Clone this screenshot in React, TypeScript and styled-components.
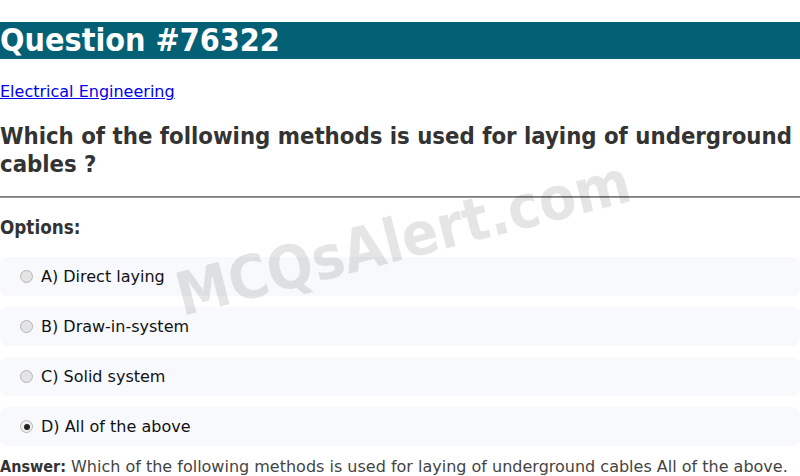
import React from "react";
import styled, { createGlobalStyle } from "styled-components";

const Global = createGlobalStyle`
  html, body { margin: 0; padding: 0; background: #fff; }
  body { font-family: "DejaVu Sans", Verdana, sans-serif; font-size: 16px; overflow: hidden; }
  b, strong, h1, h2, h3 { font-family: "DejaVu Sans Condensed", "DejaVu Sans", sans-serif; }
`;

const Page = styled.div`
  position: relative;
  width: 800px;
  height: 476px;
  overflow: hidden;
  display: flow-root;
`;

const TitleBar = styled.h1`
  margin: 22px 0 0;
  background: #036075;
  color: #fff;
  font-size: 32px;
  font-weight: bold;
  line-height: 37px;
`;

const Category = styled.p`
  margin: 24px 0 16px;
  line-height: 18.6px;
  a { color: #0000ee; text-decoration: underline; }
`;

const QuestionText = styled.h2`
  margin: 20px 0 18.5px;
  font-size: 23.7px;
  font-weight: bold;
  line-height: 28px;
  color: #333;
`;

const Rule = styled.hr`
  margin: 0;
  border: 0;
  border-top: 1px solid #7a7a7a;
  border-bottom: 1px solid #9a9a9a;
  height: 0;
`;

const OptionsTitle = styled.h3`
  margin: 19px 0 18.5px;
  font-size: 18.72px;
  font-weight: bold;
  line-height: 21.8px;
  color: #333;
`;

const OptionList = styled.div`
  display: flex;
  flex-direction: column;
  gap: 11.4px;
`;

const Option = styled.label`
  display: flex;
  align-items: center;
  background: #f8f9fc;
  border-radius: 8px;
  padding: 11px 15px 9px;
  line-height: 18.6px;
  color: #111;
`;

const Radio = styled.span<{ $checked?: boolean }>`
  box-sizing: border-box;
  width: 13px;
  height: 13px;
  margin: -2px 8px 0 5px;
  border-radius: 50%;
  border: 1px solid #b5b5b5;
  background: #e4e4e4;
  position: relative;
  flex: none;
  ${(p) =>
    p.$checked &&
    `
    background: #eee;
    &::after {
      content: "";
      position: absolute;
      left: 2.5px; top: 2.5px;
      width: 6px; height: 6px;
      border-radius: 50%;
      background: #222;
    }
  `}
`;

const Answer = styled.p`
  margin: 12.5px 0 0;
  line-height: 18.6px;
  color: #444;
  white-space: nowrap;
  b { color: #333; }
`;

const Watermark = styled.div`
  position: absolute;
  left: 403px;
  top: 238px;
  transform: translate(-50%, -50%) rotate(-14.4deg);
  font-family: "DejaVu Sans Condensed", "DejaVu Sans", sans-serif;
  font-size: 60px;
  font-weight: bold;
  color: rgba(0, 0, 0, 0.1);
  white-space: nowrap;
  pointer-events: none;
`;

const options = [
  { text: "A) Direct laying", checked: false },
  { text: "B) Draw-in-system", checked: false },
  { text: "C) Solid system", checked: false },
  { text: "D) All of the above", checked: true },
];

export default function App() {
  return (
    <>
      <Global />
      <Page>
        <TitleBar>Question #76322</TitleBar>
        <Category>
          <a href="#">Electrical Engineering</a>
        </Category>
        <QuestionText>
          Which of the following methods is used for laying of underground cables ?
        </QuestionText>
        <Rule />
        <OptionsTitle>Options:</OptionsTitle>
        <OptionList>
          {options.map((o) => (
            <Option key={o.text}>
              <Radio $checked={o.checked} />
              {o.text}
            </Option>
          ))}
        </OptionList>
        <Answer>
          <b>Answer:</b> Which of the following methods is used for laying of underground cables All of the above.
        </Answer>
        <Watermark>MCQsAlert.com</Watermark>
      </Page>
    </>
  );
}
